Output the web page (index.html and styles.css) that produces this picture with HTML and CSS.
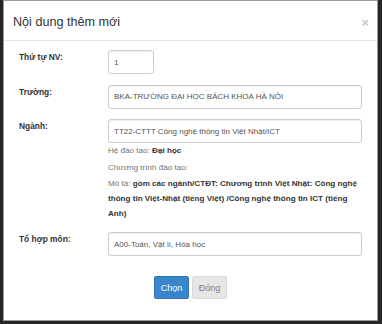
FILE: index.html
```html
<!DOCTYPE html>
<html lang="vi">
<head>
    <meta charset="UTF-8">
    <meta name="viewport" content="width=device-width, initial-scale=1.0">
    <title>Nội dung thêm mới</title>
    <link rel="stylesheet" href="styles.css">
</head>
<body>
    <div class="modal">
        <div class="modal-header">
            <h4 class="modal-title">Nội dung thêm mới</h4>
            <span class="close">&times;</span>
        </div>

        <div class="modal-body">
            <div class="form-row">
                <label class="form-label" for="thu_tu">Thứ tự NV:</label>
                <div class="form-field">
                    <input class="input input-short" type="text" id="thu_tu" value="1">
                </div>
            </div>

            <div class="form-row">
                <label class="form-label" for="truong">Trường:</label>
                <div class="form-field">
                    <input class="input" type="text" id="truong" value="BKA-TRƯỜNG ĐẠI HỌC BÁCH KHOA HÀ NỘI">
                </div>
            </div>

            <div class="form-row form-row-help">
                <label class="form-label" for="nganh">Ngành:</label>
                <div class="form-field">
                    <input class="input" type="text" id="nganh" value="TT22-CTTT Công nghệ thông tin Việt Nhật/ICT">
                    <div class="help help-first">Hệ đào tạo: <b>Đại học</b></div>
                    <div class="help help-second">Chương trình đào tạo:</div>
                    <div class="help help-desc">Mô tả: <b>gồm các ngành/CTĐT: Chương trình Việt Nhật: Công nghệ thông tin Việt-Nhật (tiếng Việt) /Công nghệ thông tin ICT (tiếng Anh)</b></div>
                </div>
            </div>

            <div class="form-row form-row-last">
                <label class="form-label" for="to_hop">Tổ hợp môn:</label>
                <div class="form-field">
                    <input class="input" type="text" id="to_hop" value="A00-Toán, Vật lí, Hóa học">
                </div>
            </div>
        </div>

        <div class="modal-footer">
            <button type="button" class="btn btn-primary">Chọn</button>
            <button type="button" class="btn btn-default">Đóng</button>
        </div>
    </div>
</body>
</html>
```

FILE: styles.css
```css
* {
    box-sizing: border-box;
}

html, body {
    margin: 0;
    height: 100%;
}

body {
    background-color: #262626;
    padding: 0 4px 3px 3px;
    font-family: "Liberation Sans", Arial, sans-serif;
    font-size: 8.4px;
    color: #333;
}

.modal {
    background-color: white;
    border: 1px solid #9a9a9a;
    height: 321px;
    display: flex;
    flex-direction: column;
}

.modal-header {
    height: 40px;
    flex: none;
    padding: 3px 8px 0 9px;
    border-bottom: 1px solid #e5e5e5;
    display: flex;
    align-items: center;
    justify-content: space-between;
}

.modal-title {
    margin: 0;
    font-size: 12.6px;
    font-weight: normal;
    line-height: 1;
}

.close {
    font-size: 13px;
    font-weight: bold;
    color: #c9c9c9;
    line-height: 1;
}

.modal-body {
    padding: 9px 15px 0 15px;
}

.form-row {
    display: flex;
    margin-bottom: 10.5px;
}

.form-row-help {
    margin-bottom: 11px;
}

.form-row-last {
    margin-bottom: 0;
}

.form-label {
    width: 89px;
    flex: none;
    font-weight: bold;
    line-height: 14px;
}

.form-field {
    flex: 1;
}

.input {
    display: block;
    width: 100%;
    height: 24px;
    margin: 0;
    padding: 0 5px;
    border: 1px solid #ccc;
    border-radius: 3px;
    box-shadow: inset 0 1px 1px rgba(0, 0, 0, 0.075);
    font-family: inherit;
    font-size: 8px;
    color: #555;
}

.input-short {
    width: 46px;
}

.help {
    color: #737373;
    font-size: 8.1px;
    line-height: 14px;
}

.help b {
    color: #333;
}

.help-first {
    margin-top: 1px;
}

.help-second {
    margin-top: 3px;
}

.help-desc {
    max-width: 250px;
    margin-top: 1px;
    line-height: 15px;
}

.modal-footer {
    padding-top: 20px;
    display: flex;
    justify-content: center;
    gap: 3px;
}

.btn {
    height: 23px;
    width: 35px;
    padding: 0;
    border: 1px solid transparent;
    border-radius: 2px;
    font-family: inherit;
    font-size: 9px;
    cursor: pointer;
}

.btn-primary {
    background-color: #3a86cd;
    border-color: #2f74b5;
    color: white;
}

.btn-default {
    background-color: #e6e6e6;
    border-color: #d9d9d9;
    color: #808080;
}
```
